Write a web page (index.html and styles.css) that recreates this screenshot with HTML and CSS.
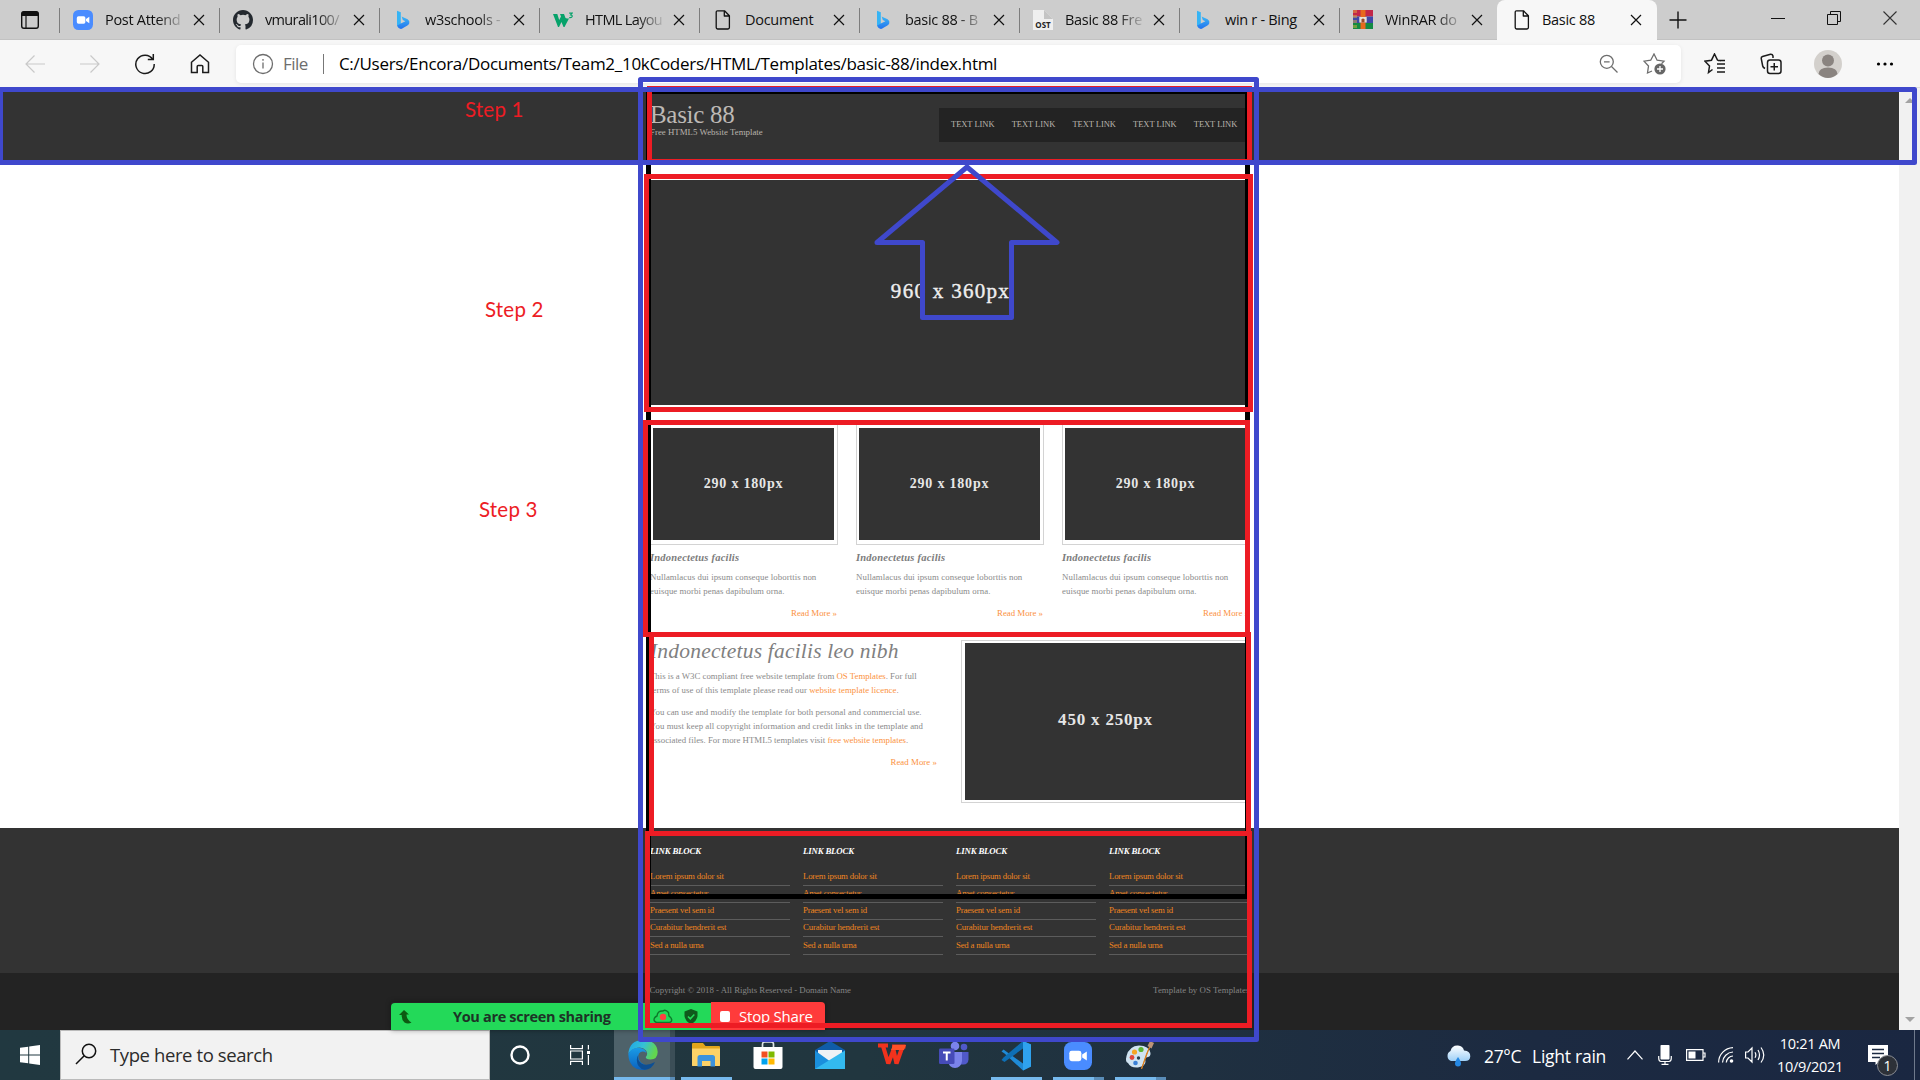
FILE: index.html
```html
<!DOCTYPE html>
<html lang="en">
<head>
<meta charset="utf-8">
<title>Basic 88</title>
<link rel="stylesheet" href="styles.css">
</head>
<body>
<svg class="defs" width="0" height="0">
  <defs>
    <linearGradient id="g-bing" x1="0" y1="0" x2="0" y2="1"><stop offset="0" stop-color="#3db7f5"/><stop offset="1" stop-color="#2272ee"/></linearGradient>
    <linearGradient id="g-edge" x1="0" y1="0" x2="1" y2="0.3"><stop offset="0" stop-color="#1ea4e8"/><stop offset="0.55" stop-color="#35c1d6"/><stop offset="1" stop-color="#62d64f"/></linearGradient>
    <linearGradient id="g-edge2" x1="0" y1="0" x2="0" y2="1"><stop offset="0" stop-color="#1a9be6"/><stop offset="1" stop-color="#0b62be"/></linearGradient>
    <linearGradient id="g-cloud" x1="0" y1="0" x2="0" y2="1"><stop offset="0" stop-color="#ffffff"/><stop offset="1" stop-color="#9fd0f7"/></linearGradient>
    <symbol id="i-page" viewBox="0 0 20 20"><path d="M3.2 2.2Q3.2 .8 4.6.8H11.5L16.4 5.8V17.6Q16.4 19 15 19H4.6Q3.2 19 3.2 17.6ZM11.3 1V6H16.2" fill="none" stroke="#111" stroke-width="1.3" stroke-linejoin="round"/></symbol>
    <symbol id="i-bing" viewBox="0 0 20 20"><path d="M4 .8L7.8 2.2V14.2L4.6 16.4Q4 15.8 4 15Z" fill="#35b4f5"/><path d="M4.2 15.6L7.8 13.4L12.4 11.2L9.8 9.9L8.6 6.6L14.6 9.2Q17 10.6 16.3 13.2Q15.9 14.6 14.4 15.6L8.8 18.8Q5.4 19.4 4.2 15.6Z" fill="url(#g-bing)"/></symbol>
    <symbol id="i-zoom" viewBox="0 0 20 20"><rect width="20" height="20" rx="5.4" fill="#4a8cff"/><rect x="3.8" y="6.3" width="8.6" height="7.4" rx="1.7" fill="#fff"/><path d="M13 9L16.3 6.8V13.2L13 11Z" fill="#fff"/></symbol>
    <symbol id="i-close" viewBox="0 0 12 12"><path d="M1 1L11 11M11 1L1 11" stroke="#111" stroke-width="1.2" fill="none"/></symbol>
  </defs>
</svg>

<header class="tabs">
  <div class="tab-actions"><svg width="20" height="20" viewBox="0 0 20 20"><rect x="1.7" y="1.7" width="16.6" height="16.6" rx="2.2" fill="none" stroke="#111" stroke-width="1.4"/><path d="M1.5 3.5Q1.5 1.5 3.5 1.5H16.5Q18.500 1.500 18.500 3.500V6H1.500Z" fill="#111"/><path d="M6 6V18" stroke="#111" stroke-width="1.2"/></svg></div>
  <div class="tab"><svg class="fav"><use href="#i-zoom"/></svg><span class="name fade">Post Attend</span><svg class="x"><use href="#i-close"/></svg></div>
  <div class="tab"><svg class="fav" viewBox="0 0 16 16"><path fill="#24292f" d="M8 0C3.580 0 0 3.580 0 8c0 3.540 2.290 6.530 5.470 7.590.4.070.55-.17.55-.38 0-.19-.01-.82-.01-1.490-2.010.370-2.530-.49-2.690-.94-.09-.23-.48-.94-.82-1.130-.28-.15-.68-.52-.01-.53.63-.01 1.080.58 1.230.82.72 1.210 1.870.87 2.330.66.07-.52.28-.87.51-1.070-1.780-.2-3.640-.89-3.640-3.950 0-.87.31-1.590.82-2.150-.08-.2-.36-1.020.08-2.120 0 0 .67-.21 2.200.82a7.600 7.600 0 0 1 4 0c1.530-1.040 2.200-.82 2.200-.82.44 1.100.16 1.920.08 2.120.51.56.82 1.270.82 2.150 0 3.070-1.870 3.750-3.650 3.950.29.25.54.73.54 1.480 0 1.070-.01 1.930-.01 2.200 0 .21.15.46.55.38A8 8 0 0 0 16 8c0-4.420-3.580-8-8-8z"/></svg><span class="name fade snug">vmurali100/</span><svg class="x"><use href="#i-close"/></svg></div>
  <div class="tab"><svg class="fav"><use href="#i-bing"/></svg><span class="name fade">w3schools -</span><svg class="x"><use href="#i-close"/></svg></div>
  <div class="tab"><svg class="fav" viewBox="0 0 20 20"><path d="M0 4H4.300L6.200 10L8 6.500L7 4H11L12.500 8L14 8.500H16L11.500 17H10.500L8.500 12L6 17H5Z" fill="#06a26a"/><path d="M16.200 3.200H19L17.700 4.900Q19.300 5 19.200 6.400Q18.900 8 16.200 7.600" fill="none" stroke="#06a26a" stroke-width="1.200"/></svg><span class="name fade snug">HTML Layou</span><svg class="x"><use href="#i-close"/></svg></div>
  <div class="tab"><svg class="fav"><use href="#i-page"/></svg><span class="name">Document</span><svg class="x"><use href="#i-close"/></svg></div>
  <div class="tab"><svg class="fav"><use href="#i-bing"/></svg><span class="name fade">basic 88 - B</span><svg class="x"><use href="#i-close"/></svg></div>
  <div class="tab"><svg class="fav" viewBox="0 0 20 20"><path d="M0 0H11L20 9V20H0Z" fill="#efefef"/><path d="M11 0V9H20Z" fill="#c4c4c4"/><text x="10" y="17.500" text-anchor="middle" class="ost">OST</text></svg><span class="name fade">Basic 88 Fre</span><svg class="x"><use href="#i-close"/></svg></div>
  <div class="tab"><svg class="fav"><use href="#i-bing"/></svg><span class="name">win r - Bing</span><svg class="x"><use href="#i-close"/></svg></div>
  <div class="tab last"><svg class="fav" viewBox="0 0 20 20"><path d="M0 0H20V6.500H0Z" fill="#c22748"/><path d="M0 6.500H20V13H0Z" fill="#3f48a8"/><path d="M0 13H20V19H0Z" fill="#138a43"/><path d="M1 0V19M3 0V19" stroke="#e9b93a" stroke-width=".9" stroke-dasharray="3 2"/><rect x="7.500" width="5" height="19" fill="#e8691d"/><rect x="6.300" y="7" width="7.400" height="5.500" fill="#e8e1d6"/><path d="M8.500 12.500V9.500Q10 7.500 11.500 9.500V12.500" fill="#9b4a2b"/></svg><span class="name fade">WinRAR do</span><svg class="x"><use href="#i-close"/></svg></div>
  <div class="tab active"><svg class="fav"><use href="#i-page"/></svg><span class="name">Basic 88</span><svg class="x"><use href="#i-close"/></svg></div>
  <svg class="plus" width="18" height="18" viewBox="0 0 18 18"><path d="M9 .5V17.500M.5 9H17.500" stroke="#111" stroke-width="1.400"/></svg>
  <div class="win">
    <svg width="14" height="14" viewBox="0 0 14 14"><path d="M0 7.500H14" stroke="#111"/></svg>
    <svg width="14" height="14" viewBox="0 0 14 14"><path d="M.5 3.500H10.500V13.500H.5ZM3.500 3V.5H13.500V10.500H11" fill="none" stroke="#111"/></svg>
    <svg width="14" height="14" viewBox="0 0 14 14"><path d="M.5.500L13.500 13.500M13.500.5L.5 13.500" stroke="#333" stroke-width="1.100"/></svg>
  </div>
</header>

<nav class="toolbar">
  <svg width="20" height="20" viewBox="0 0 20 20" class="dim"><path d="M20 10H1M9.500 1.500L1 10L9.500 18.500"/></svg>
  <svg width="20" height="20" viewBox="0 0 20 20" class="dim"><path d="M0 10H19M10.500 1.500L19 10L10.500 18.500"/></svg>
  <svg width="22" height="22" viewBox="0 0 22 22" class="ink"><path d="M18.700 6.300A9.200 9.200 0 1 0 20.200 11M19.300 1V6.500H13.800"/></svg>
  <svg width="20" height="20" viewBox="0 0 20 20" class="ink"><path d="M1.500 8.300L10 1L18.500 8.300V18.500H12.800V12.500Q12.800 11.500 11.800 11.500H8.200Q7.200 11.500 7.200 12.500V18.500H1.500Z"/></svg>
  <div class="address">
    <svg width="22" height="22" viewBox="0 0 22 22" class="grey"><circle cx="11" cy="11" r="9.500"/><path d="M11 9.500V15.500M11 6V7.800"/></svg>
    <span class="scheme">File</span><i class="bar"></i><span class="url">C:/Users/Encora/Documents/Team2_10kCoders/HTML/Templates/basic-88/index.html</span>
    <svg width="20" height="20" viewBox="0 0 20 20" class="grey push"><circle cx="7.800" cy="7.800" r="6.500"/><path d="M12.500 12.500L18.500 18.500M5 7.800H10.600"/></svg>
    <svg width="24" height="22" viewBox="0 0 24 22" class="grey"><path d="M9 18L4.500 20L5.500 13L1 8.200L7.700 7.200L11 1L14.100 7.200L21 8.200L18.500 10.800"/><circle cx="17" cy="16" r="5.600" fill="#666" stroke="none"/><path d="M17 13V19M14 16H20" stroke="#fff"/></svg>
  </div>
  <div class="tools">
    <svg width="22" height="22" viewBox="0 0 22 22" class="ink"><path d="M8.500 16.500L4.500 19.500L5.500 13L1 8.200L7.500 7.200L10.500 1L13.500 7.200L17 7.800M13 11H21M13 15H21M13 19H21M14 7.500H21"/></svg>
    <svg width="22" height="22" viewBox="0 0 22 22" class="ink"><path d="M5 15.500Q3 14.500 2.700 13L1.200 5.500Q1 4 2.500 3.500L10.500 1.200Q12.500 1 13 3V5"/><rect x="7.500" y="7" width="13.500" height="13.500" rx="2.500"/><path d="M14.250 10V17.500M10.500 13.750H18"/></svg>
    <svg width="28" height="28" viewBox="0 0 28 28"><circle cx="14" cy="14" r="14" fill="#d3d0cc"/><circle cx="14" cy="10.500" r="6" fill="#8a8480"/><path d="M4.500 24Q5 17.500 14 17.500T23.500 24Q19 28 14 28T4.500 24Z" fill="#8a8480"/></svg>
    <svg width="18" height="6" viewBox="0 0 18 6"><circle cx="2.500" cy="3" r="1.600"/><circle cx="9" cy="3" r="1.600"/><circle cx="15.500" cy="3" r="1.600"/></svg>
  </div>
</nav>

<div class="viewport">
  <div class="site">
    <div class="band head">
      <div class="wrap head-row">
        <div><h1>Basic 88</h1><p>Free HTML5 Website Template</p></div>
        <ul class="menu"><li>TEXT LINK</li><li>TEXT LINK</li><li>TEXT LINK</li><li>TEXT LINK</li><li>TEXT LINK</li></ul>
      </div>
    </div>
    <main class="wrap">
      <div class="hero">960 x 360px</div>
      <div class="cards">
        <article><div class="frame"><div class="ph">290 x 180px</div></div><h3>Indonectetus facilis</h3><p>Nullamlacus dui ipsum conseque loborttis non<br>euisque morbi penas dapibulum orna.</p><p class="more">Read More »</p></article>
        <article><div class="frame"><div class="ph">290 x 180px</div></div><h3>Indonectetus facilis</h3><p>Nullamlacus dui ipsum conseque loborttis non<br>euisque morbi penas dapibulum orna.</p><p class="more">Read More »</p></article>
        <article><div class="frame"><div class="ph">290 x 180px</div></div><h3>Indonectetus facilis</h3><p>Nullamlacus dui ipsum conseque loborttis non<br>euisque morbi penas dapibulum orna.</p><p class="more">Read More »</p></article>
      </div>
      <section class="intro">
        <div class="copy">
          <h2>Indonectetus facilis leo nibh</h2>
          <p class="tight">This is a W3C compliant free website template from <a>OS Templates</a>. For full<br><span class="loose">terms of use of this template please read our <a>website template licence</a>.</span></p>
          <p>You can use and modify the template for both personal and commercial use.<br>You must keep all copyright information and credit links in the template and<br><span class="snugger">associated files. For more HTML5 templates visit <a>free website templates</a>.</span></p>
          <p class="more">Read More »</p>
        </div>
        <div class="frame big"><div class="ph">450 x 250px</div></div>
      </section>
    </main>
    <div class="band links">
      <div class="wrap cols">
        <div><h4>LINK BLOCK</h4><ul><li>Lorem ipsum dolor sit</li><li>Amet consectetur</li><li>Praesent vel sem id</li><li>Curabitur hendrerit est</li><li>Sed a nulla urna</li></ul></div>
        <div><h4>LINK BLOCK</h4><ul><li>Lorem ipsum dolor sit</li><li>Amet consectetur</li><li>Praesent vel sem id</li><li>Curabitur hendrerit est</li><li>Sed a nulla urna</li></ul></div>
        <div><h4>LINK BLOCK</h4><ul><li>Lorem ipsum dolor sit</li><li>Amet consectetur</li><li>Praesent vel sem id</li><li>Curabitur hendrerit est</li><li>Sed a nulla urna</li></ul></div>
        <div><h4>LINK BLOCK</h4><ul><li>Lorem ipsum dolor sit</li><li>Amet consectetur</li><li>Praesent vel sem id</li><li>Curabitur hendrerit est</li><li>Sed a nulla urna</li></ul></div>
      </div>
    </div>
    <footer class="band foot"><div class="wrap foot-row"><span>Copyright © 2018 - All Rights Reserved - Domain Name</span><span class="by">Template by OS Templates</span></div></footer>
  </div>
  <div class="scroll"><i class="up"></i><i class="down"></i></div>
</div>

<footer class="taskbar">
  <div class="start"><svg width="20" height="20" viewBox="0 0 20 20"><path d="M0 2.800L8.200 1.700V9.500H0ZM9.200 1.500L20 0V9.500H9.200ZM0 10.500H8.200V18.300L0 17.200ZM9.200 10.500H20V20L9.200 18.500Z" fill="#fff"/></svg></div>
  <div class="search"><svg width="22" height="22" viewBox="0 0 22 22"><circle cx="14" cy="8" r="6.700" fill="none" stroke="#111" stroke-width="1.500"/><path d="M9.200 12.800L1 21" stroke="#111" stroke-width="1.500"/></svg><span>Type here to search</span></div>
  <div class="cell sys"><svg width="20" height="20" viewBox="0 0 20 20"><circle cx="10" cy="10" r="8.500" fill="none" stroke="#fff" stroke-width="2.400"/></svg></div>
  <div class="cell sys"><svg width="20" height="20" viewBox="0 0 20 20" fill="none" stroke="#fff" stroke-width="1.200"><path d="M.6 0V3.600H12.400V0M.6 20V16.400H12.400V20M.6 6H12.400V14H.6ZM18.400 0V4.500M18.400 10V20"/><path d="M17 7.500H20" stroke-width="3"/></svg></div>
  <div class="cell app on cur double"><svg width="30" height="30" viewBox="0 0 30 30"><path d="M.3 14Q1.500 0 15 0Q29 .5 29.700 12Q29.500 19.500 22.500 19.500Q17.500 19.300 17.800 17Q20.500 14 18 10.500Q14 6 7 8.500Q2 10.500.3 14Z" fill="url(#g-edge)"/><path d="M.3 14Q3.500 7.500 10.500 7.800Q17 8.300 18.500 13Q14 9.800 11 13.500Q9 18 13 22.500Q18 27 25.500 24Q21 30 14.500 30Q1 29 .3 14Z" fill="url(#g-edge2)"/><path d="M10.300 15Q9 20 13.500 23.500Q19 26.500 27 22Q24 29.500 16.500 29.800Q9 28 8.800 20Q8.800 17 10.300 15Z" fill="#0d4f94"/></svg></div>
  <div class="cell app on"><svg width="28" height="28" viewBox="0 0 28 28"><path d="M0 2Q0 1 1 1H11L13.500 4H27Q28 4 28 5V24H0Z" fill="#e2a51b"/><path d="M0 6.500H28V23Q28 24 27 24H1Q0 24 0 23Z" fill="#fcd267"/><path d="M5.500 24.500V15.500Q5.500 13 8 13H20.500Q23 13 23 15.500V24.500H18.500V19H10V24.500Z" fill="#3b93dd"/></svg></div>
  <div class="cell app"><svg width="30" height="30" viewBox="0 0 30 30"><path d="M9.500 6V3Q9.500 1 12 1H18Q20.500 1 20.500 3V6" fill="none" stroke="#dfe4e6" stroke-width="1.700"/><path d="M.5 6H29.500V26Q29.500 28 27.500 28H2.500Q.5 28 .5 26Z" fill="#fff"/><path d="M8.500 10.500H14.500V16.500H8.500Z" fill="#f15022"/><path d="M15.500 10.500H21.500V16.500H15.500Z" fill="#7fba00"/><path d="M8.500 17.500H14.500V23.500H8.500Z" fill="#00a3ee"/><path d="M15.500 17.500H21.500V23.500H15.500Z" fill="#ffb902"/></svg></div>
  <div class="cell app"><svg width="30" height="30" viewBox="0 0 30 30"><path d="M0 9L15 0L30 9V20H0Z" fill="#0f5ca8"/><path d="M3 9H27V20H3Z" fill="#eef2f5"/><path d="M0 9.500L16 21L10 28H0Z" fill="#1a8fdc"/><path d="M30 9.500V28H0Z" fill="#33b9ef"/></svg></div>
  <div class="cell app"><svg width="30" height="30" viewBox="0 0 30 30"><path d="M1 4.500H11M6 5L11.300 22.500L16.500 9L19.500 22.500L25.500 5.500M15 5.500H28.500" fill="none" stroke="#f1321d" stroke-width="4.200" stroke-linejoin="bevel"/><path d="M16 4H29L27 9H14Z" fill="#ff5128"/></svg></div>
  <div class="cell app"><svg width="30" height="30" viewBox="0 0 30 30"><circle cx="16" cy="5" r="4.300" fill="#7b83eb"/><circle cx="25" cy="6" r="3.300" fill="#5059c9"/><path d="M20 11H29.500V18.500Q29 23.500 24.500 23.500H20Z" fill="#5059c9"/><path d="M9 11H23V20Q22 27 16 27T9 20Z" fill="#7b83eb"/><rect y="7.500" width="15.500" height="15.500" rx="1.300" fill="#464bb8"/><path d="M4 11.500H11.500M7.750 11.500V19.500" stroke="#fff" stroke-width="2"/></svg></div>
  <div class="cell app on"><svg width="30" height="30" viewBox="0 0 30 30"><path d="M22 0L30 3.500V25.500L22 29.500L3.500 12.500L.5 10.500L2.500 8.500L22 22.500Z" fill="#1f8ad6"/><path d="M22 0V7.500L3.500 21L.5 19L2.500 16.500Z" fill="#0e6fb5"/><path d="M22 0L30 3.500V25.500L22 29.500Z" fill="#2fa2ee"/></svg></div>
  <div class="cell app on double"><svg width="28" height="28"><use href="#i-zoom"/></svg></div>
  <div class="cell app on double"><svg width="30" height="30" viewBox="0 0 30 30"><path d="M1.500 15Q4 5 14 4.500Q24 4.500 25.500 12Q26 16 21 16.500Q19 17.500 20.500 20Q21 25 13 26.500Q5.500 27 3 22Q0 21 1.500 15Z" fill="#cfe3f1"/><circle cx="9.500" cy="11" r="2.600" fill="#f6a623"/><circle cx="16" cy="8.500" r="2.600" fill="#5cb531"/><circle cx="7" cy="16.500" r="2.400" fill="#e0483b"/><circle cx="10.500" cy="22" r="2.300" fill="#3a80d6"/><circle cx="13.500" cy="17" r="1.700" fill="#28404c"/><path d="M25 5L16.500 28L21.500 13Z" fill="#e8912b" stroke="#d97e1e"/><path d="M22.500 5L25 0L29 2L26.500 7.500Z" fill="#bb9477"/></svg></div>
  <div class="tray">
    <svg class="t-rain" width="26" height="24" viewBox="0 0 26 24"><path d="M6 17A5.500 5.500 0 0 1 5.500 7Q7 1 13 1.500Q18 2 19 6.500Q25.500 7 25.300 12.500Q25 17 20 17Z" fill="url(#g-cloud)"/><path d="M13 13Q16 17 16 19.500A3 3 0 0 1 10 19.500Q10 17 13 13Z" fill="#2588e4"/></svg>
    <span class="deg">27°C</span><span class="rain">Light rain</span>
    <svg class="t-up" width="16" height="10" viewBox="0 0 16 10"><path d="M.5 9.300L8 1L15.500 9.300"/></svg>
    <svg class="t-mic" width="14" height="20" viewBox="0 0 14 20"><rect x="2.500" width="9" height="14.500" rx=".8" fill="#fff" stroke="none"/><path d="M.7 11V13Q.7 16.500 3 16.500H11Q13.300 16.500 13.300 13V11M7 16.500V19.300M3.500 19.300H10.500"/></svg>
    <svg class="t-bat" width="20" height="12" viewBox="0 0 20 12"><path d="M.6.600H17V11.400H.6ZM17 4H19V8H17"/><rect x="2.500" y="2.500" width="7" height="7" fill="#fff" stroke="none"/></svg>
    <svg class="t-wifi" width="16" height="16" viewBox="0 0 16 16"><path d="M.6 15.500A15 15 0 0 1 15 .6M4.500 15.500A11 11 0 0 1 15 5M8.300 15.500A7 7 0 0 1 15 9"/><circle cx="13.500" cy="14" r="1.800" fill="#fff" stroke="none"/></svg>
    <svg class="t-vol" width="21" height="18" viewBox="0 0 21 18"><path d="M.6 6H3L7 2V16L3 12H.6ZM10 6.300Q11.700 9 10 11.700M13 4Q16 9 13 14M16 1.500Q21.500 9 16 16.500"/></svg>
    <div class="clock"><span>10:21 AM</span><span class="date">10/9/2021</span></div>
    <div class="note"><svg width="20" height="20" viewBox="0 0 20 20"><path d="M0 0H20V17H11L7.500 20V17H0Z" fill="#fff"/><path d="M4 4.500H16M4 8.500H16M4 12.500H12" stroke="#1c2a41" stroke-width="1.300"/></svg><b>1</b></div>
    <i class="peek"></i>
  </div>
</footer>

<div class="share">
  <div class="share-ok"><svg width="13" height="14" viewBox="0 0 13 14"><path d="M5 0L10 4.500H7.500Q7.500 9.500 12.500 12.500Q9 14.500 5.500 12.500Q2.500 10 2.700 5H0Z" fill="#0d5a12"/></svg><strong>You are screen sharing</strong>
    <svg class="cloud" width="20" height="16" viewBox="0 0 20 16"><path d="M3.500 13.500Q0 12 1.500 9Q2.500 7.500 4 7Q4.500 1.500 10 2Q12.500 0 15.500 3.500L16 7Q19.500 9.500 18.500 12Q18 13.500 16 13.500Z" fill="none" stroke="#0d7a2a" stroke-width="1.400"/><circle cx="10" cy="8" r="3.200" fill="#ff4040"/></svg>
    <svg width="14" height="15" viewBox="0 0 14 15"><path d="M7 0L13.500 2.500V7Q13 12 7 15Q1 12 .5 7V2.500Z" fill="#0f5a1c"/><path d="M4 7.500L6.300 9.800L10.300 5.500" fill="none" stroke="#25d959" stroke-width="1.500"/></svg>
  </div>
  <div class="share-stop"><i></i>Stop Share</div>
</div>

<svg class="marks" width="1920" height="1080" viewBox="0 0 1920 1080">
  <rect class="k" x="648.5" y="91.500" width="599" height="805"/>
  <rect class="r" x="649.5" y="88.500" width="600" height="73"/>
  <rect class="r" x="646.500" y="176.500" width="604" height="233"/>
  <rect class="r" x="645.500" y="422.500" width="602" height="212"/>
  <rect class="r" x="651.500" y="634.500" width="597" height="199"/>
  <rect class="r" x="647.500" y="833.500" width="602" height="192"/>
  <rect class="b" x=".5" y="89.500" width="1914" height="73"/>
  <rect class="b" x="640.500" y="79.500" width="616" height="960"/>
  <path class="b" d="M967 167L1057 242.500H1011.500V317.500H922.500V242.500H877Z"/>
</svg>
<span class="step s1">Step 1</span>
<span class="step s2">Step 2</span>
<span class="step s3">Step 3</span>
</body>
</html>
```
FILE: styles.css
```css
* { box-sizing: border-box; margin: 0; padding: 0; }
html, body { width: 1920px; height: 1080px; overflow: hidden; }
body { display: flex; flex-direction: column; position: relative; font-family: "Open Sans", sans-serif; background: #fff; }
svg { display: block; flex: none; }
ul { list-style: none; }
.defs { position: absolute; }

/* browser tabs */
.tabs { height: 40px; flex: none; display: flex; background: #cdcdcd; border-bottom: 1px solid #c2c2c2; }
.tab-actions { width: 59px; padding: 10px 0 0 20px; }
.tab { width: 160px; height: 40px; display: flex; align-items: center; padding-left: 13px; position: relative; }
.tab::before { content: ""; width: 1px; height: 25px; background: #7d7d7d; margin-left: -13px; margin-right: 13px; }
.fav { width: 20px; height: 20px; margin-right: 12px; }
.name { width: 77px; white-space: nowrap; font-size: 14.5px; letter-spacing: -.3px; line-height: 22px; color: #111; }
.fade { -webkit-mask-image: linear-gradient(90deg, #000 68%, rgba(0,0,0,.15)); mask-image: linear-gradient(90deg, #000 68%, rgba(0,0,0,.15)); }
.snug { letter-spacing: -.65px; }
.x { width: 12px; height: 12px; margin-left: 11px; }
.tab.last { width: 158px; }
.tab.last .name { width: 75px; }
.tab.active { background: #f7f7f7; border-radius: 8px 8px 0 0; padding-left: 15px; }
.tab.active::before { display: none; }
.tab.active .fav { margin-right: 10px; }
.ost { font: bold 8px "Open Sans", sans-serif; fill: #222; }
.plus { margin: 11px 0 0 12px; }
.win { display: flex; gap: 42px; margin: 11px 22px 0 auto; padding-right: 1px; }

/* toolbar */
.toolbar { height: 48px; flex: none; display: flex; align-items: center; background: #f7f7f7; padding: 0 26px 0 25px; border-bottom: 1px solid #ddd; }
.toolbar > svg { margin-right: 35px; }
.toolbar > svg:nth-child(3) { margin-left: -1px; }
.toolbar > svg:nth-child(4) { margin-right: 26px; margin-left: -1px; }
.dim { fill: none; stroke: #c9c9c9; stroke-width: 1.2; }
.ink { fill: none; stroke: #1b1b1b; stroke-width: 1.5; }
.grey { fill: none; stroke: #6d6d6d; stroke-width: 1.3; }
.address { width: 1445px; height: 38px; background: #fff; border-radius: 5px; box-shadow: 0 1px 4px rgba(0,0,0,.08); display: flex; align-items: center; padding: 0 14px 0 16px; font-size: 17px; line-height: 24px; white-space: nowrap; }
.scheme { color: #6d6d6d; letter-spacing: -.5px; margin-left: 9px; }
.bar { width: 1px; height: 20px; background: #777; margin: 0 15px 0 15px; }
.url { color: #000; letter-spacing: -.283px; }
.push { margin-left: auto; margin-right: 24px; }
.tools { display: flex; align-items: center; margin-left: auto; }
.tools svg { margin-left: 34px; }
.tools svg:nth-child(3) { margin-left: 32px; }
.tools svg:first-child { margin-left: 0; }

/* page */
.viewport { height: 942px; flex: none; display: flex; background: #fff; }
.site { width: 1899px; font-family: "Liberation Serif", serif; font-size: 8.8px; line-height: 14px; }
.wrap { width: 599px; margin: 0 auto; }
.head { height: 77px; background: #333; color: #b9b4ad; }
.head-row { display: flex; justify-content: space-between; }
h1 { font-weight: 400; font-size: 25px; line-height: 28px; letter-spacing: -.3px; margin-top: 13px; color: #bdb9b5; }
.head p { line-height: 12px; margin-top: -3px; letter-spacing: .03px; }
.menu { display: flex; height: 34px; margin-top: 20px; padding: 0 12px; gap: 17.2px; background: #232323; width: 310px; font-size: 8.5px; line-height: 33px; letter-spacing: -.05px; }
.menu li { white-space: nowrap; width: 43.5px; }
main { height: 663px; padding-top: 15px; color: #8a8a8a; }
.hero { height: 225px; background: #333; color: #eee; display: flex; align-items: center; justify-content: center; font-size: 21px; letter-spacing: 1.3px; padding-bottom: 4px; padding-left: 2px; -webkit-text-stroke: .4px #eee; }
.cards { display: flex; justify-content: space-between; margin-top: 19px; width: 600px; }
.cards article { width: 188px; }
.frame { border: 1px solid #d3d3d3; padding: 3px 3px 4px 2px; height: 121px; }
.ph { height: 100%; background: #333; color: #e6e6e6; font-weight: 700; font-size: 14px; letter-spacing: .8px; display: flex; align-items: center; justify-content: center; }
h3 { font: italic bold 10.5px/20px "Liberation Serif", serif; letter-spacing: .217px; color: #7c7c7c; margin: 3px 0 2px; }
.cards p { letter-spacing: .065px; white-space: nowrap; }
.more, .cards p.more { text-align: right; color: #fb9240; margin-top: 8px; letter-spacing: 0; }
.cards p.more { padding-right: 1px; }
.intro { display: flex; justify-content: space-between; width: 600px; margin-top: 20px; }
.copy { width: 287px; margin-top: -2px; }
h2 { font: italic 21.5px/26px "Liberation Serif", serif; letter-spacing: .196px; color: #808080; margin-bottom: 5px; white-space: nowrap; }
.copy p { letter-spacing: .055px; white-space: nowrap; }
.copy p.tight { letter-spacing: -.005px; margin-bottom: 8px; }
.loose { letter-spacing: .035px; }
.snugger { letter-spacing: 0; }
.copy a { color: #fb9240; }
.frame.big { width: 289px; height: 163px; padding: 2px 3px 2px; }
.big .ph { font-size: 17px; padding-bottom: 3px; }
.links { height: 145px; background: #333; padding-top: 16px; color: #ef851f; }
.cols { display: flex; gap: 13px; }
.cols > div { width: 140px; }
h4 { font: italic bold 8.8px/14px "Liberation Serif", serif; letter-spacing: -.16px; color: #fff; margin-bottom: 11px; }
.cols li { height: 17px; border-bottom: 1px solid #5c5c5c; letter-spacing: -.22px; }
.cols li:nth-child(4) { letter-spacing: -.14px; }
.cols li:last-child { height: 18px; padding-top: 1px; }
.foot { height: 57px; background: #232323; color: #858585; padding-top: 10px; }
.foot-row { display: flex; justify-content: space-between; width: 600px; }
.by { letter-spacing: .054px; }
.scroll { width: 21px; background: #f1f1f1; display: flex; flex-direction: column; justify-content: space-between; align-items: center; padding: 10px 0; }
.scroll i { border: 5px solid transparent; }
.scroll .up { border-top: 0; border-bottom-color: #a3a3a3; }
.scroll .down { border-bottom: 0; border-top-color: #a3a3a3; margin-bottom: -2px; }

/* taskbar */
.taskbar { height: 50px; flex: none; display: flex; background: linear-gradient(90deg, #213840 0, #21363f 45%, #1f3040 62%, #1c2a41 80%, #1a2741); }
.start { width: 60px; padding: 15px 20px; }
.search { width: 430px; background: #f2f2f2; border: 1px solid #bbb; display: flex; align-items: center; padding: 0 0 2px 14px; gap: 13px; font-size: 18.5px; letter-spacing: -.4px; color: #2b2b2b; }
.cell { width: 62px; display: flex; align-items: center; justify-content: center; position: relative; }
.cell.sys { width: 60px; }
.cell.sys + .cell.app { margin-left: 4px; width: 61px; }
.app svg { margin-top: 2px; }
.cur { background: linear-gradient(90deg, #4e626a 56px, #3b4e57 56px); }
.cur svg { margin-top: 0; margin-right: 3px; }
.on::after { content: ""; position: absolute; bottom: 0; left: 6px; right: 5px; height: 3px; background: #76b9ed; }
.double::after { background: linear-gradient(90deg, #76b9ed 41px, #5a8db8 41px); }
.cur::after { left: 0; right: 0; background: linear-gradient(90deg, #76b9ed 56px, #5a8db8 56px); }
.tray { margin-left: auto; width: 475px; display: flex; align-items: center; color: #fff; white-space: nowrap; }
.tray svg { fill: none; stroke: #fff; stroke-width: 1.2; }
.tray .t-rain { stroke: none; margin-top: 2px; }
.deg { font-size: 17.5px; letter-spacing: -.34px; width: 48px; margin-left: 13px; padding-top: 2px; }
.rain { font-size: 17.5px; letter-spacing: -.25px; width: 75px; padding-top: 2px; }
.t-up { margin: 0 0 0 20px; }
.t-mic { margin-left: 15px; }
.t-bat { margin-left: 14px; }
.t-wifi { margin-left: 12px; }
.t-vol { margin-left: 11px; }
.clock { width: 70px; margin-left: 9px; display: flex; flex-direction: column; align-items: center; font-size: 14.5px; line-height: 23px; letter-spacing: -.3px; }
.note { position: relative; margin-left: 23px; }
.note b { position: absolute; left: 9px; top: 10px; width: 21px; height: 21px; border-radius: 50%; background: #2d3138; border: 1px solid #8b8e94; font: 14px/19px "Open Sans", sans-serif; text-align: center; }
.note svg, .note svg path:first-child { stroke: none; }
.peek { width: 1px; height: 50px; background: #6f7a8c; margin: 0 5px 0 auto; }

/* screen sharing bar */
.share { position: absolute; left: 391px; top: 1002px; height: 28px; display: flex; align-items: flex-end; box-shadow: 0 0 5px rgba(0,0,0,.4); }
.share-ok { width: 320px; height: 27px; background: #23d959; border-radius: 4px 0 0; display: flex; align-items: center; padding-left: 8px; color: #1d3326; }
.share-ok strong { font-size: 14.5px; letter-spacing: -.33px; margin-left: 41px; width: 200px; }
.share-ok .cloud { margin-right: 11px; }
.share-stop { width: 114px; height: 28px; background: #ff3b3b; border-radius: 0 4px 0 0; color: #fff; font-size: 15px; letter-spacing: -.22px; display: flex; align-items: center; padding-left: 9px; }
.share-stop i { width: 10px; height: 11px; border-radius: 2px; background: #fff; margin-right: 9px; }

/* drawn annotations */
.marks { position: absolute; left: 0; top: 0; fill: none; stroke-width: 5; }
.k { stroke: #000; }
.r { stroke: #ed1c24; }
.b { stroke: #3f48cc; stroke-linejoin: round; }
.step { position: absolute; font: 20.5px/24px Lato, sans-serif; letter-spacing: .2px; color: #ed1c24; }
.s1 { left: 465px; top: 97px; }
.s2 { left: 485px; top: 297px; }
.s3 { left: 479px; top: 497px; }
```
